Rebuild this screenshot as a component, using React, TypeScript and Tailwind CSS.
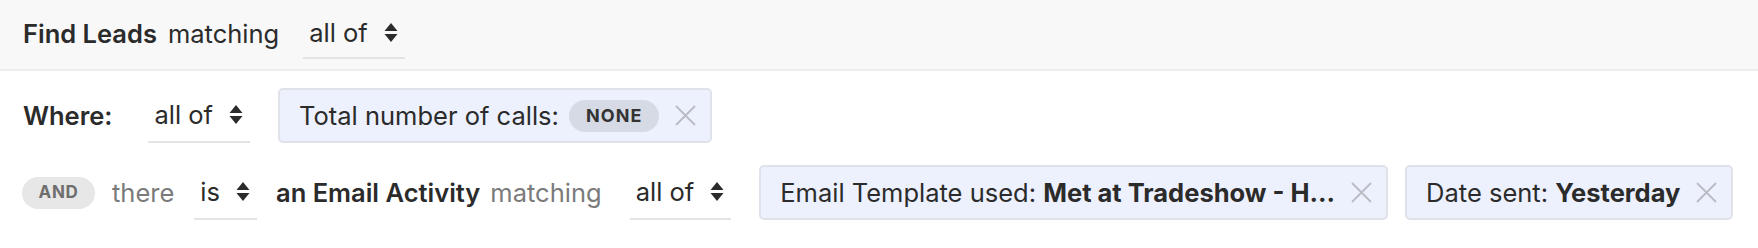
function SortArrows() {
  return (
    <svg width="14" height="21" viewBox="0 0 14 21" className="shrink-0" fill="currentColor">
      <path d="M7 1 L13.5 9 L0.5 9 Z" />
      <path d="M0.5 12 L13.5 12 L7 20 Z" />
    </svg>
  );
}

function CloseIcon() {
  return (
    <svg width="21" height="21" viewBox="0 0 21 21" className="shrink-0 text-[#b9bcc3]" stroke="currentColor" strokeWidth="1.8" fill="none">
      <path d="M1 1 L20 20 M20 1 L1 20" />
    </svg>
  );
}

function Select({ label, h = "h-[54px]" }: { label: string; h?: string }) {
  return (
    <div className={`inline-flex ${h} items-center gap-[16px] border-b-2 border-[#e4e4e4] pl-[6px] pr-[7px] text-[#2b2b2b]`}>
      <span>{label}</span>
      <SortArrows />
    </div>
  );
}

function Chip({ children }: { children: React.ReactNode }) {
  return (
    <div className="inline-flex h-[55px] items-center gap-[16px] rounded-[5px] border-2 border-[#dfe2e8] bg-[#edf1fd] pl-[19px] pr-[14px] whitespace-nowrap text-[#2b2b2b]">
      {children}
      <CloseIcon />
    </div>
  );
}

export default function App() {
  return (
    <div className="w-[1758px] h-[248px] bg-white text-[25.5px] font-['Inter',sans-serif] leading-none text-[#2b2b2b]">
      <div className="flex h-[71px] items-center border-b-2 border-[#ededed] bg-[#f8f8f8] pl-[23px] pb-[2px]">
        <span className="font-semibold">Find Leads</span>
        <span className="ml-[11px]">matching</span>
        <div className="ml-[24px]">
          <Select label="all of" h="h-[50px]" />
        </div>
      </div>

      <div className="flex items-center pl-[23px] pt-[17px]">
        <span className="font-semibold">Where:</span>
        <div className="ml-[36px]">
          <Select label="all of" />
        </div>
        <div className="ml-[28px]">
          <Chip>
            <span className="flex items-center gap-[10px]">
              Total number of calls:
              <span className="inline-flex h-[32px] items-center rounded-full bg-[#d6dae4] px-[17px] text-[18px] font-bold tracking-[0.06em] text-[#333]">
                NONE
              </span>
            </span>
          </Chip>
        </div>
      </div>

      <div className="flex items-center pl-[22px] pt-[22px]">
        <span className="inline-flex h-[32px] w-[73px] items-center justify-center rounded-full bg-[#e7e7e7] text-[17px] font-bold tracking-[0.04em] text-[#6e6e6e]">
          AND
        </span>
        <span className="ml-[17px] text-[#7b7b7b]">there</span>
        <div className="ml-[20px]">
          <Select label="is" />
        </div>
        <span className="ml-[19px] font-semibold">an Email Activity</span>
        <span className="ml-[10px] text-[#7b7b7b]">matching</span>
        <div className="ml-[28px]">
          <Select label="all of" />
        </div>
        <div className="ml-[28px]">
          <Chip>
            <span>
              Email Template used: <span className="font-bold">Met at Tradeshow - H...</span>
            </span>
          </Chip>
        </div>
        <div className="ml-[17px]">
          <Chip>
            <span>
              Date sent: <span className="font-bold">Yesterday</span>
            </span>
          </Chip>
        </div>
      </div>
    </div>
  );
}
